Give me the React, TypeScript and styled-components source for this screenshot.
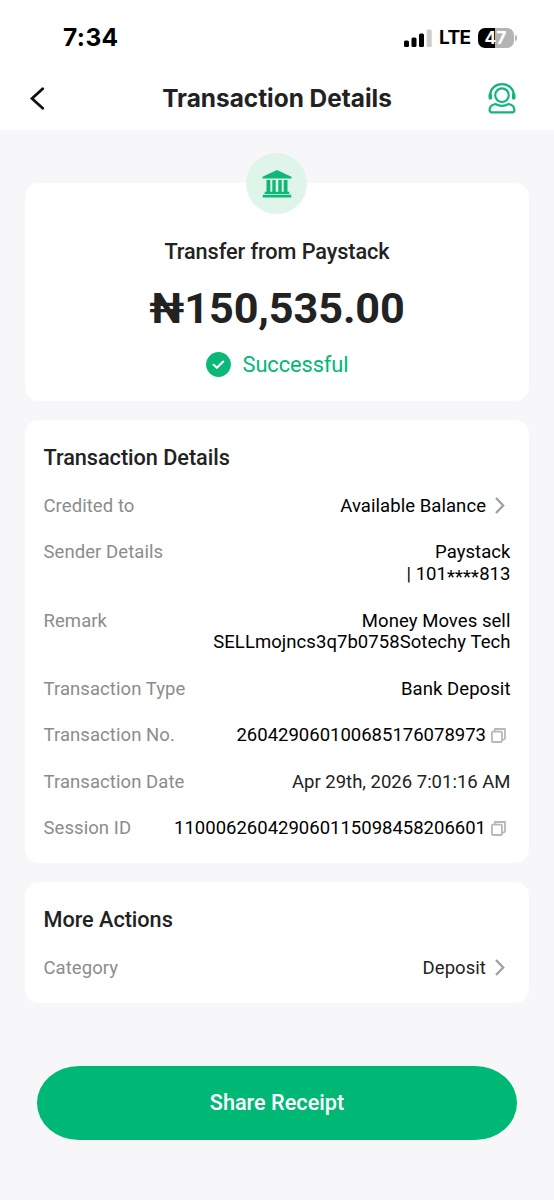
import React from "react";
import styled, { createGlobalStyle } from "styled-components";

const GlobalStyle = createGlobalStyle`
  *, *::before, *::after { box-sizing: border-box; }
  body { margin: 0; background: #f7f7fa; }
`;

const Screen = styled.div`
  width: 554px;
  height: 1200px;
  display: flex;
  flex-direction: column;
  background: #f7f7fa;
  font-family: Roboto, sans-serif;
  color: #222;
  overflow: hidden;
`;

const Top = styled.header`
  height: 130px;
  background: #fff;
  font-family: Inter, sans-serif;
  flex: none;
`;

const StatusBar = styled.div`
  height: 75px;
  padding: 0 37px 0 63px;
  display: flex;
  align-items: center;
  justify-content: space-between;
  color: #000;
`;

const Clock = styled.span`
  padding-bottom: 2px;
  font-size: 24.5px;
  font-weight: 700;
  letter-spacing: 0.4px;
`;

const StatusIcons = styled.div`
  display: flex;
  align-items: center;
  svg { display: block; }
`;

const Network = styled.span`
  margin: 0 7.5px 0 7px;
  font-size: 19px;
  font-weight: 650;
  letter-spacing: -0.6px;
`;

const Battery = styled.div`
  width: 36px;
  height: 20px;
  padding-right: 1px;
  border-radius: 7px;
  background: linear-gradient(90deg, #000 47%, #b4b4b4 47%);
  color: #fff;
  font-size: 17.5px;
  font-weight: 700;
  line-height: 19px;
  text-align: center;
`;

const BatteryCap = styled.span`
  width: 2px;
  height: 6px;
  margin-left: 1px;
  border-radius: 0 3px 3px 0;
  background: #b4b4b4;
`;

const NavBar = styled.nav`
  height: 47px;
  padding: 0 37px 0 29px;
  display: grid;
  grid-template-columns: 30px 1fr 30px;
  align-items: center;
  svg { display: block; }
`;

const PageTitle = styled.h1`
  margin: 0;
  padding: 0 0 2px 8px;
  text-align: center;
  font-size: 24.4px;
  font-weight: 700;
  white-space: nowrap;
`;

const Content = styled.main`
  flex: 1;
  padding: 53px 25px 0;
  display: flex;
  flex-direction: column;
  gap: 19px;
`;

const Card = styled.section<{ $height: number }>`
  height: ${(p) => p.$height}px;
  padding: 24px 18.5px 0;
  border-radius: 14px;
  background: #fff;
`;

const Summary = styled(Card)`
  padding-top: 0;
  display: flex;
  flex-direction: column;
  align-items: center;
`;

const BankBadge = styled.div`
  width: 61px;
  height: 61px;
  margin-top: -30px;
  margin-right: 1px;
  border-radius: 50%;
  background: #dff5ea;
  display: flex;
  align-items: center;
  justify-content: center;
  flex: none;
`;

const Party = styled.div`
  margin-top: 24px;
  font-size: 21.7px;
  font-weight: 500;
  line-height: 28px;
  letter-spacing: -0.08px;
`;

const Amount = styled.div`
  margin-top: 17px;
  font-size: 43.2px;
  font-weight: 700;
  line-height: 52px;
  letter-spacing: -0.1px;
`;

const Status = styled.div`
  margin-top: 17px;
  display: flex;
  align-items: center;
  gap: 12px;
  color: #00b875;
  font-size: 21.8px;
  line-height: 26px;
  letter-spacing: -0.08px;
  svg { margin-bottom: 1px; }
`;

const SectionTitle = styled.h2`
  margin: 0 0 23.8px;
  font-size: 21.7px;
  font-weight: 500;
  line-height: 28px;
  letter-spacing: -0.04px;
`;

const Rows = styled.div`
  display: flex;
  flex-direction: column;
  gap: 24.8px;
`;

const Row = styled.div`
  display: flex;
  justify-content: space-between;
  font-size: 18.5px;
  line-height: 21.7px;
`;

const Label = styled.span`
  color: #8c8c8c;
  letter-spacing: 0.07px;
`;

const Value = styled.div<{ $soft?: boolean; $spacing?: number }>`
  display: flex;
  align-items: center;
  text-align: right;
  white-space: pre-line;
  color: ${(p) => (p.$soft ? "#222" : "#000")};
  letter-spacing: ${(p) => p.$spacing ?? 0}px;
  svg { flex: none; }
`;

const Lines = styled(Value)`
  flex-direction: column;
  align-items: flex-end;
`;

const Account = styled.div`
  display: flex;
`;

const Mask = styled.span`
  padding-top: 3px;
  height: 21.7px;
`;

const ShareButton = styled.button`
  width: 480px;
  height: 74px;
  margin: 44px auto 0;
  padding: 0;
  border: 0;
  border-radius: 42px / 37px;
  background: #00b875;
  color: #fff;
  font: 500 21.7px/28px Roboto, sans-serif;
`;

const SignalIcon = () => (
  <svg width="28" height="18" viewBox="0 0 28 18">
    <rect x="0" y="11.5" width="5" height="6.5" rx="1.5" />
    <rect x="7.5" y="8.5" width="5" height="9.5" rx="1.5" />
    <rect x="15" y="4.5" width="5" height="13.5" rx="1.5" />
    <rect x="22.7" y="0.5" width="5" height="17.5" rx="1.5" fill="#ccc" />
  </svg>
);

const BackIcon = () => (
  <svg width="18" height="24" viewBox="0 0 18 24" fill="none" stroke="#111" strokeWidth="2.8" strokeLinecap="round">
    <path d="M13.7 1.7 3 11.5l10.7 9.8" strokeLinejoin="miter" />
  </svg>
);

const SupportIcon = () => (
  <svg width="30" height="32" viewBox="0 0 30 32" fill="none" stroke="#14b57c" strokeWidth="2.2" strokeLinecap="round" strokeLinejoin="round">
    <circle cx="15" cy="12.2" r="6.8" />
    <path d="M3.1 11.8C3.5 5.4 8.5 1.2 15 1.2s11.5 4.2 11.900 10.600" />
    <path d="M3.300 11.800v3.200M26.700 11.800v3.200" strokeWidth="3.600" />
    <path d="M8.300 21c4.200 2.300 9.200 2.300 13.400 0 3.600.8 5.700 3.300 5.700 6.300 0 1.200-.8 2-2 2H4.600c-1.200 0-2-.8-2-2 0-3 2.100-5.500 5.700-6.300Z" />
  </svg>
);

const BankIcon = () => (
  <svg width="30" height="28" viewBox="0 0 30 28" fill="#0fb878">
    <path d="M15 0 29.5 6.800V8.500H.5V6.800Z" />
    <path d="M4.500 10H8.300V22H4.500ZM10.300 10H13.700V22H10.300ZM16.300 10H19.700V22H16.300ZM21.700 10H25.500V22H21.700Z" />
    <path d="M2.700 21.700H27.300V24H2.700ZM.7 24.800H29.300V27.500H.7Z" />
  </svg>
);

const SuccessIcon = () => (
  <svg width="25" height="25" viewBox="0 0 25 25" fill="none">
    <circle cx="12.5" cy="12.5" r="12.4" fill="#0bb878" />
    <path d="m7.600 12.800 3.300 3 6.300-6.200" stroke="#fff" strokeWidth="2.100" strokeLinecap="round" strokeLinejoin="round" />
  </svg>
);

const Chevron = styled.svg.attrs({
  width: 10,
  height: 17,
  viewBox: "0 0 10 17",
  fill: "none",
  stroke: "#a0a0a0",
  strokeWidth: 2.3,
  children: <path d="M1 1 8.2 8.5 1 16" />,
})`
  margin: 0 5.5px 1.5px 9px;
`;

const CopyIcon = styled.svg.attrs({
  width: 15,
  height: 15,
  viewBox: "0 0 15 15",
  fill: "none",
  stroke: "#b8b8b8",
  strokeWidth: 1.8,
  strokeLinejoin: "round",
  children: (
    <>
      <rect x="0.9" y="3.6" width="10" height="10.4" rx="1" />
      <path d="M3.800 3.600V1H14v9.800l-3.100 1.500" />
    </>
  ),
})`
  margin: 0 4.5px 1px 5px;
`;

export default function App() {
  return (
    <Screen>
      <GlobalStyle />
      <Top>
        <StatusBar>
          <Clock>7:34</Clock>
          <StatusIcons>
            <SignalIcon />
            <Network>LTE</Network>
            <Battery>47</Battery>
            <BatteryCap />
          </StatusIcons>
        </StatusBar>
        <NavBar>
          <BackIcon />
          <PageTitle>Transaction Details</PageTitle>
          <SupportIcon />
        </NavBar>
      </Top>
      <Content>
        <Summary $height={218}>
          <BankBadge>
            <BankIcon />
          </BankBadge>
          <Party>Transfer from Paystack</Party>
          <Amount>₦150,535.00</Amount>
          <Status>
            <SuccessIcon />
            Successful
          </Status>
        </Summary>
        <Card $height={443}>
          <SectionTitle>Transaction Details</SectionTitle>
          <Rows>
            <Row>
              <Label>Credited to</Label>
              <Value $spacing={0.06}>
                Available Balance
                <Chevron />
              </Value>
            </Row>
            <Row>
              <Label>Sender Details</Label>
              <Lines $spacing={0.06}>
                <div>Paystack</div>
                <Account>
                  <span>| 101</span>
                  <Mask>****</Mask>
                  <span>813</span>
                </Account>
              </Lines>
            </Row>
            <Row>
              <Label>Remark</Label>
              <Value $spacing={0.06}>{"Money Moves sell\nSELLmojncs3q7b0758Sotechy Tech"}</Value>
            </Row>
            <Row>
              <Label>Transaction Type</Label>
              <Value $spacing={0.06}>Bank Deposit</Value>
            </Row>
            <Row>
              <Label>Transaction No.</Label>
              <Value>
                260429060100685176078973
                <CopyIcon />
              </Value>
            </Row>
            <Row>
              <Label>Transaction Date</Label>
              <Value $soft>Apr 29th, 2026 7:01:16 AM</Value>
            </Row>
            <Row>
              <Label>Session ID</Label>
              <Value>
                110006260429060115098458206601
                <CopyIcon />
              </Value>
            </Row>
          </Rows>
        </Card>
        <Card $height={121}>
          <SectionTitle>More Actions</SectionTitle>
          <Rows>
            <Row>
              <Label>Category</Label>
              <Value $soft $spacing={0.06}>
                Deposit
                <Chevron />
              </Value>
            </Row>
          </Rows>
        </Card>
        <ShareButton>Share Receipt</ShareButton>
      </Content>
    </Screen>
  );
}
